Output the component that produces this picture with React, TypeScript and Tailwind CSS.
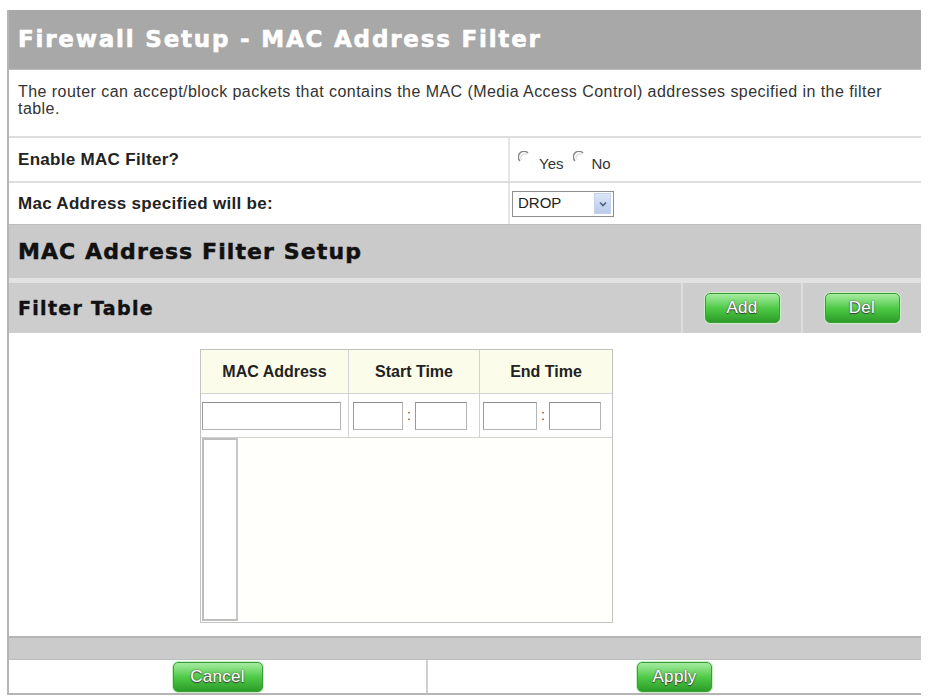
import React from "react";

function GreenButton({ label, w }: { label: string; w: string }) {
  return (
    <div
      className={`${w} h-[30px] rounded-[5px] border border-[#3f9a3a] bg-gradient-to-b from-[#a4ec9f] via-[#4fcb47] to-[#2c9d28] shadow-[0_0_0_1px_#c9eec6] flex items-center justify-center text-white text-[17px] tracking-[0.3px] [text-shadow:0_1px_1px_#3a3a3a,0_0_2px_#555] font-['Liberation_Sans',Arial,sans-serif]`}
    >
      {label}
    </div>
  );
}

function Radio() {
  return (
    <svg width="13" height="13" viewBox="0 0 13 13" className="inline-block">
      <path d="M2 10 A5.5 5.5 0 0 1 10 2" fill="none" stroke="#858585" strokeWidth="1.4" />
      <path d="M3.3 8.7 A4 4 0 0 1 8.7 3.3" fill="none" stroke="#d0d0d0" strokeWidth="1" />
    </svg>
  );
}

function TextBox({ w }: { w: string }) {
  return (
    <div className={`${w} h-[28px] bg-white border border-[#b4b4b4] border-t-[#8d8d8d] border-l-[#9a9a9a]`} />
  );
}

export default function App() {
  return (
    <div className="w-[929px] h-[698px] bg-white pt-[10px] pl-[7px] font-['Liberation_Sans',Arial,sans-serif]">
      <div className="w-[914px] h-[685px] border-l-2 border-b-2 border-[#b5b5b5] flex flex-col">
        {/* Title */}
        <div className="h-[60px] bg-[#a8a8a8] flex items-center pl-[9px] border-b border-[#bdbdbd]">
          <span className="text-white text-[23px] font-bold tracking-[1.8px] [-webkit-text-stroke:0.6px_white] font-['DejaVu_Sans',Verdana,sans-serif]">
            Firewall Setup - MAC Address Filter
          </span>
        </div>
        {/* Description */}
        <div className="h-[66px] pl-[9px] pr-[30px] pt-[13px] text-[16px] tracking-[0.45px] leading-[17px] text-[#333]">
          The router can accept/block packets that contains the MAC (Media Access Control) addresses specified in the filter table.
        </div>
        {/* Enable row */}
        <div className="h-[45px] border-t-2 border-[#dedede] flex">
          <div className="w-[501px] border-r-2 border-[#e6e6e6] flex items-center pl-[9px] text-[17px] tracking-[0.3px] font-bold text-[#222]">
            Enable MAC Filter?
          </div>
          <div className="flex-1 flex items-center pl-[8px] pt-[2px] text-[15px] text-[#333]">
            <span className="relative -top-[4px]"><Radio /></span>
            <span className="ml-[8px] pt-[7px]">Yes</span>
            <span className="relative -top-[4px] ml-[10px]"><Radio /></span>
            <span className="ml-[5px] pt-[7px]">No</span>
          </div>
        </div>
        {/* Mac address row */}
        <div className="h-[43px] border-t-2 border-[#dedede] flex">
          <div className="w-[501px] border-r-2 border-[#e6e6e6] flex items-center pl-[9px] text-[17px] tracking-[0.3px] font-bold text-[#222]">
            Mac Address specified will be:
          </div>
          <div className="flex-1 flex items-center pl-[2px]">
            <div className="w-[102px] h-[26px] border border-[#8f8f8f] bg-white flex items-center justify-between pl-[5px] pr-[2px]">
              <span className="text-[15px] text-[#222]">DROP</span>
              <div className="w-[17px] h-[21px] bg-gradient-to-b from-[#dce6f7] to-[#b9cbea] border border-[#c3d3ee] flex items-center justify-center">
                <svg width="8" height="6" viewBox="0 0 8 6">
                  <path d="M1 1.5 L4 4.5 L7 1.5" fill="none" stroke="#4d6185" strokeWidth="1.6" />
                </svg>
              </div>
            </div>
          </div>
        </div>
        {/* Section header */}
        <div className="h-[54px] bg-[#cacaca] flex items-center pl-[9px] border-t border-[#bdbdbd]">
          <span className="text-[22px] font-bold tracking-[1.1px] [-webkit-text-stroke:0.5px_#111] text-[#111] font-['DejaVu_Sans',Verdana,sans-serif]">
            MAC Address Filter Setup
          </span>
        </div>
        <div className="h-[5px] bg-[#e2e2e2]" />
        {/* Filter table row */}
        <div className="h-[50px] bg-[#cdcdcd] flex">
          <div className="flex-1 flex items-center pl-[9px]">
            <span className="text-[19px] font-bold tracking-[1.3px] [-webkit-text-stroke:0.4px_#111] text-[#111] font-['DejaVu_Sans',Verdana,sans-serif]">Filter Table</span>
          </div>
          <div className="w-[120px] border-l-2 border-[#dddddd] flex items-center justify-center">
            <GreenButton label="Add" w="w-[75px]" />
          </div>
          <div className="w-[120px] border-l-2 border-[#dddddd] flex items-center justify-center">
            <GreenButton label="Del" w="w-[75px]" />
          </div>
        </div>
        {/* Table area */}
        <div className="h-[303px] bg-white pt-[16px] pl-[191px]">
          <div className="w-[413px] border border-[#c2c2c2]">
            <div className="h-[43px] grid grid-cols-[148px_131px_1fr] bg-[#fcfcea] text-[16px] font-bold text-[#222]">
              <div className="border-r border-[#d2d2d2] flex items-center justify-center">MAC Address</div>
              <div className="border-r border-[#d2d2d2] flex items-center justify-center">Start Time</div>
              <div className="flex items-center justify-center">End Time</div>
            </div>
            <div className="h-[44px] grid grid-cols-[148px_131px_1fr] border-t border-[#d2d2d2] bg-white">
              <div className="border-r border-[#d2d2d2] flex items-center pl-[1px]">
                <TextBox w="w-[139px]" />
              </div>
              <div className="border-r border-[#d2d2d2] flex items-center pl-[4px] gap-[4px] text-[14px] text-[#555]">
                <TextBox w="w-[50px]" />
                <span>:</span>
                <TextBox w="w-[52px]" />
              </div>
              <div className="flex items-center pl-[3px] gap-[4px] text-[14px] text-[#555]">
                <TextBox w="w-[54px]" />
                <span>:</span>
                <TextBox w="w-[52px]" />
              </div>
            </div>
            <div className="h-[185px] border-t border-[#d2d2d2] bg-[#fffffb] flex">
              <div className="w-[36px] h-[183px] ml-[1px] border-2 border-[#bdbdbd] border-r-[#c8c8c8] bg-white" />
            </div>
          </div>
        </div>
        {/* Gray bar */}
        <div className="h-[23px] bg-[#cbcbcb] border-t-2 border-[#b5b5b5]" />
        {/* Bottom buttons */}
        <div className="flex-1 flex border-t border-[#bdbdbd]">
          <div className="w-[419px] border-r-2 border-[#cfcfcf] flex items-center justify-center">
            <GreenButton label="Cancel" w="w-[90px]" />
          </div>
          <div className="flex-1 flex items-center justify-center">
            <GreenButton label="Apply" w="w-[75px]" />
          </div>
        </div>
      </div>
    </div>
  );
}
